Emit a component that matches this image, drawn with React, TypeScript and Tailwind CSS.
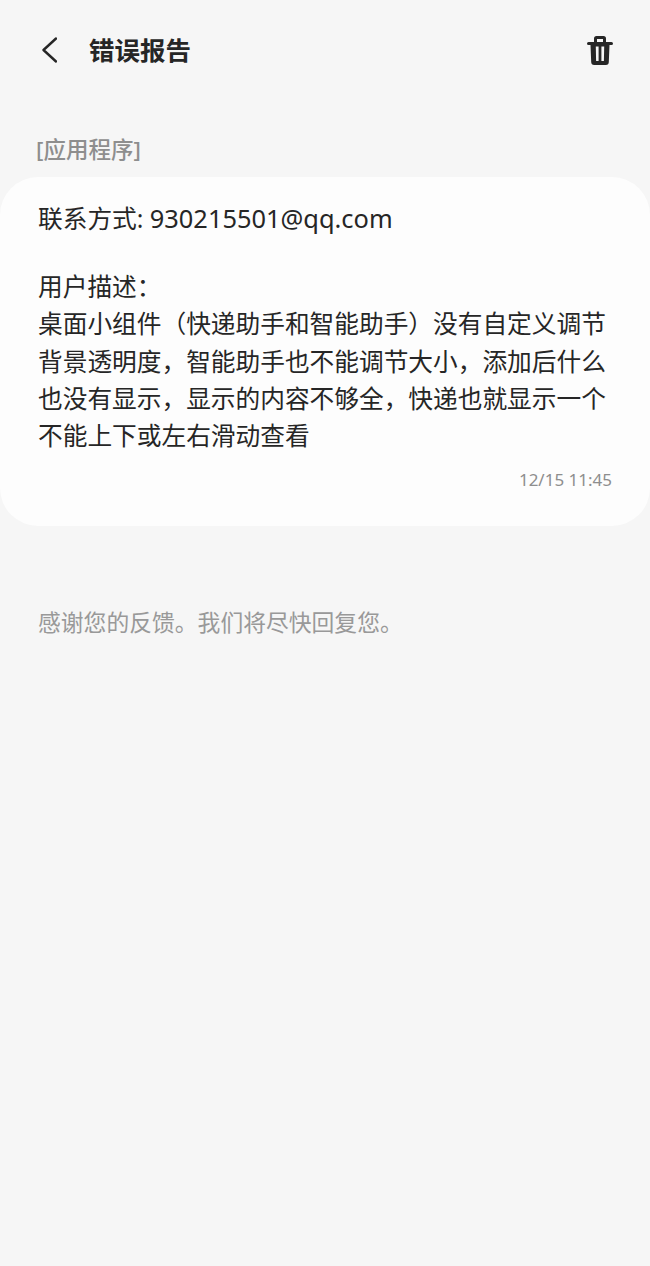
const FONT = "font-['Noto_Sans','Noto_Sans_CJK_SC',sans-serif]";

export default function App() {
  return (
    <div className={`w-[650px] h-[1266px] bg-[#f6f6f6] ${FONT} overflow-hidden`}>
      {/* Header */}
      <div className="flex items-center justify-between h-[36px] pl-[41px] pr-[37px] pt-[32px] box-content">
        <div className="flex items-center">
          <svg width="16" height="26" viewBox="0 0 16 26" fill="none" stroke="#262626" strokeWidth="2.4" strokeLinecap="round" strokeLinejoin="round">
            <path d="M15 1.500 L2.500 13 L15 24.500" />
          </svg>
          <h1 className="ml-[32px] text-[25.500px] leading-[36px] font-bold text-[#262626]">错误报告</h1>
        </div>
        <svg width="26" height="29" viewBox="0 0 26 29" fill="#262626">
          <path fillRule="evenodd" d="M7 6 V2.500 A2.500 2.500 0 0 1 9.500 0 H16.500 A2.500 2.500 0 0 1 19 2.500 V6 H24.500 a1.500 1.500 0 0 1 0 3 H22.500 L21.800 26 A3 3 0 0 1 18.800 29 H7.200 A3 3 0 0 1 4.200 26 L3.500 9 H1.500 a1.500 1.500 0 0 1 0-3 Z M10 6 H16 V3 H10 Z M8.800 10.500 L9.100 25 H11.600 V10.500 Z M14.400 10.500 V25 H16.900 L17.200 10.500 Z" />
        </svg>
      </div>

      <p className="mt-[65px] pl-[36px] text-[22.500px] leading-[34px] font-medium text-[#8e8e8e]">[应用程序]</p>

      {/* Message card */}
      <div className="mt-[10px] h-[349px] bg-[#fdfdfd] rounded-[38px] pt-[24px] pl-[38px] pr-[30px]">
        <p className="text-[24.700px] leading-[34px] text-[#262626]">
          联系方式: <span className="text-[25.400px]">930215501@qq.com</span>
        </p>
        <div className="mt-[32px] text-[24.700px] leading-[37.300px] text-[#262626]">
          <p>用户描述：</p>
          <p>桌面小组件（快递助手和智能助手）没有自定义调节</p>
          <p>背景透明度，智能助手也不能调节大小，添加后什么</p>
          <p>也没有显示，显示的内容不够全，快递也就显示一个</p>
          <p>不能上下或左右滑动查看</p>
        </div>
        <p className="mt-[13px] pr-[8px] text-right text-[17px] leading-[26px] text-[#8e8e8e]">12/15 11:45</p>
      </div>

      <p className="mt-[80px] pl-[38px] text-[22.800px] leading-[34px] text-[#999999]">感谢您的反馈。我们将尽快回复您。</p>
    </div>
  );
}
